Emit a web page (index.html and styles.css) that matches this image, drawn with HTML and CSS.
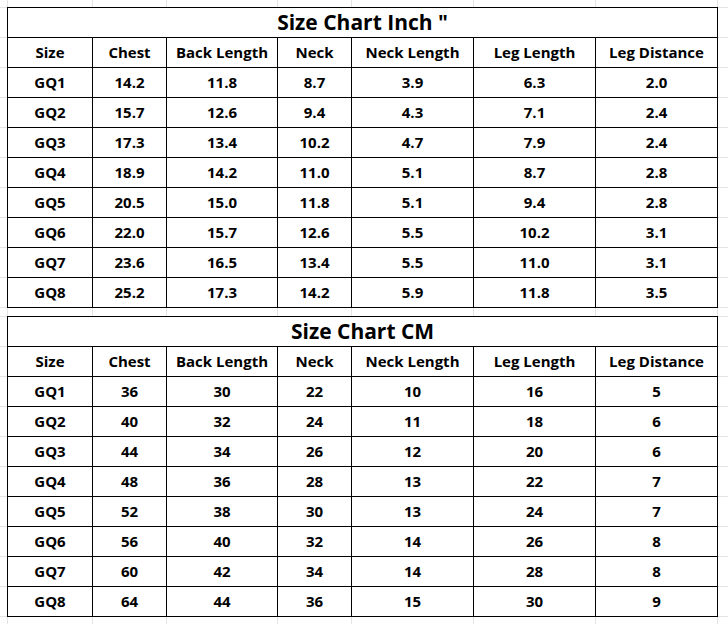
FILE: index.html
```html
<!DOCTYPE html>
<html>
<head>
<meta charset="utf-8">
<link rel="stylesheet" href="styles.css">
</head>
<body>
<div class="sheet">
  <table class="chart">
    <colgroup><col class="c1"><col class="c2"><col class="c3"><col class="c4"><col class="c5"><col class="c6"><col class="c7"></colgroup>
    <tr class="title"><td colspan="7">Size Chart Inch "</td></tr>
    <tr><td>Size</td><td>Chest</td><td>Back Length</td><td>Neck</td><td>Neck Length</td><td>Leg Length</td><td>Leg Distance</td></tr>
    <tr><td>GQ1</td><td>14.2</td><td>11.8</td><td>8.7</td><td>3.9</td><td>6.3</td><td>2.0</td></tr>
    <tr><td>GQ2</td><td>15.7</td><td>12.6</td><td>9.4</td><td>4.3</td><td>7.1</td><td>2.4</td></tr>
    <tr><td>GQ3</td><td>17.3</td><td>13.4</td><td>10.2</td><td>4.7</td><td>7.9</td><td>2.4</td></tr>
    <tr><td>GQ4</td><td>18.9</td><td>14.2</td><td>11.0</td><td>5.1</td><td>8.7</td><td>2.8</td></tr>
    <tr><td>GQ5</td><td>20.5</td><td>15.0</td><td>11.8</td><td>5.1</td><td>9.4</td><td>2.8</td></tr>
    <tr><td>GQ6</td><td>22.0</td><td>15.7</td><td>12.6</td><td>5.5</td><td>10.2</td><td>3.1</td></tr>
    <tr><td>GQ7</td><td>23.6</td><td>16.5</td><td>13.4</td><td>5.5</td><td>11.0</td><td>3.1</td></tr>
    <tr><td>GQ8</td><td>25.2</td><td>17.3</td><td>14.2</td><td>5.9</td><td>11.8</td><td>3.5</td></tr>
  </table>
  <table class="chart">
    <colgroup><col class="c1"><col class="c2"><col class="c3"><col class="c4"><col class="c5"><col class="c6"><col class="c7"></colgroup>
    <tr class="title"><td colspan="7">Size Chart CM</td></tr>
    <tr><td>Size</td><td>Chest</td><td>Back Length</td><td>Neck</td><td>Neck Length</td><td>Leg Length</td><td>Leg Distance</td></tr>
    <tr><td>GQ1</td><td>36</td><td>30</td><td>22</td><td>10</td><td>16</td><td>5</td></tr>
    <tr><td>GQ2</td><td>40</td><td>32</td><td>24</td><td>11</td><td>18</td><td>6</td></tr>
    <tr><td>GQ3</td><td>44</td><td>34</td><td>26</td><td>12</td><td>20</td><td>6</td></tr>
    <tr><td>GQ4</td><td>48</td><td>36</td><td>28</td><td>13</td><td>22</td><td>7</td></tr>
    <tr><td>GQ5</td><td>52</td><td>38</td><td>30</td><td>13</td><td>24</td><td>7</td></tr>
    <tr><td>GQ6</td><td>56</td><td>40</td><td>32</td><td>14</td><td>26</td><td>8</td></tr>
    <tr><td>GQ7</td><td>60</td><td>42</td><td>34</td><td>14</td><td>28</td><td>8</td></tr>
    <tr><td>GQ8</td><td>64</td><td>44</td><td>36</td><td>15</td><td>30</td><td>9</td></tr>
  </table>
</div>
</body>
</html>
```
FILE: styles.css
```css
html, body {
  margin: 0;
  padding: 0;
}
body {
  width: 728px;
  height: 624px;
  background-color: #fff;
  background-image:
    linear-gradient(#e4e4e4, #e4e4e4),
    linear-gradient(#e4e4e4, #e4e4e4),
    linear-gradient(#e4e4e4, #e4e4e4),
    linear-gradient(#e4e4e4, #e4e4e4),
    linear-gradient(#e4e4e4, #e4e4e4),
    linear-gradient(#e4e4e4, #e4e4e4),
    linear-gradient(#e4e4e4, #e4e4e4),
    linear-gradient(#e4e4e4, #e4e4e4),
    repeating-linear-gradient(to bottom, #e4e4e4 0 1px, transparent 1px 30px),
    repeating-linear-gradient(to bottom, #e4e4e4 0 1px, transparent 1px 30px);
  background-repeat: no-repeat;
  background-size:
    1px 100%, 1px 100%, 1px 100%, 1px 100%,
    1px 100%, 1px 100%, 1px 100%, 1px 100%,
    100% 301px, 100% 301px;
  background-position:
    7px 0, 92px 0, 166px 0, 277px 0,
    351px 0, 473px 0, 595px 0, 717px 0,
    0 7px, 0 316px;
  font-family: "Open Sans", "Noto Sans", sans-serif;
  color: #000;
}
.sheet {
  padding: 7px 0 0 7px;
  display: flex;
  flex-direction: column;
  gap: 8px;
}
.chart {
  border-collapse: collapse;
  table-layout: fixed;
  width: 711px;
  background: #fff;
}
.c1 { width: 85px; }
.c2 { width: 74px; }
.c3 { width: 111px; }
.c4 { width: 74px; }
.c5 { width: 122px; }
.c6 { width: 122px; }
.c7 { width: 122px; }
.chart tr {
  height: 30px;
}
.chart td {
  border: 1px solid #000;
  padding: 0 0 2px;
  text-align: center;
  vertical-align: middle;
  font-size: 15px;
  font-weight: 700;
  line-height: 18px;
  white-space: nowrap;
}
.chart .title td {
  font-size: 21px;
  line-height: 26px;
}
```
